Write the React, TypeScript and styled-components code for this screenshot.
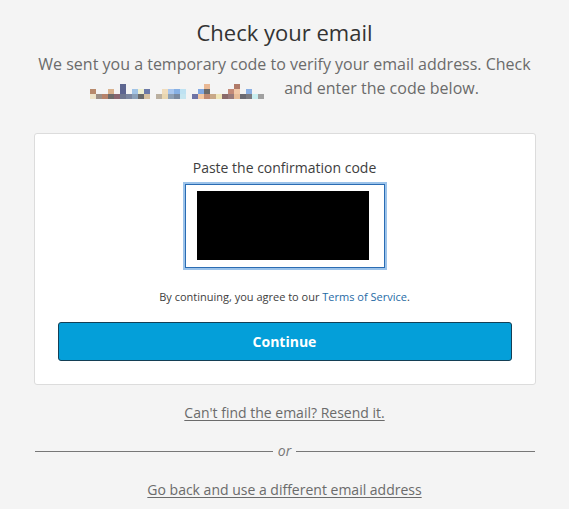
import React from "react";
import styled, { createGlobalStyle } from "styled-components";

const Global = createGlobalStyle`
  html, body { margin: 0; padding: 0; background: #f4f4f4; }
  body { font-family: "Open Sans", "Noto Sans", sans-serif; color: #333; }
`;

const Page = styled.main`
  width: 502px;
  margin: 0 auto;
  padding-top: 17px;
  display: flex;
  flex-direction: column;
  align-items: stretch;
  text-align: center;
`;

const Title = styled.h1`
  margin: 0;
  font-size: 22px;
  line-height: 30px;
  font-weight: 400;
  color: #333;
`;

const Subtitle = styled.p`
  margin: 5px -10px 0;
  font-size: 16px;
  line-height: 24px;
  color: #6b6b6b;
`;

const Pixels = styled.span`
  display: inline-flex;
  vertical-align: middle;
  margin-right: 20px;
  position: relative;
  top: 2px;
`;

const PixelCol = styled.span`
  display: inline-flex;
  flex-direction: column;
  justify-content: flex-end;
  width: 6px;
`;

const Px = styled.span<{ $c: string }>`
  display: block;
  width: 6px;
  height: 5px;
  background: ${(p) => p.$c};
`;

const Card = styled.section`
  margin-top: 33px;
  background: #fff;
  border: 1px solid #dcdcdc;
  border-radius: 3px;
  padding: 24px 23px 23px;
  display: flex;
  flex-direction: column;
  align-items: center;
`;

const Label = styled.label`
  font-size: 14px;
  line-height: 20px;
  color: #3e3e3e;
`;

const CodeField = styled.div`
  box-sizing: border-box;
  margin-top: 6px;
  width: 200px;
  height: 84px;
  border: 1px solid #2a6cb3;
  box-shadow: 0 0 0 2px #9cc3ea;
  background: #fff;
  display: flex;
  padding: 6px 15px 7px 11px;
`;

const Redaction = styled.div`
  flex: 1;
  background: #000;
`;

const Terms = styled.p`
  margin: 21px 0 0;
  font-size: 11px;
  line-height: 16px;
  color: #3e3e3e;
`;

const TermsLink = styled.a`
  color: #1f6ba6;
  text-decoration: none;
`;

const Button = styled.button`
  margin-top: 17px;
  width: 100%;
  height: 39px;
  border: 1px solid #143f55;
  border-radius: 3px;
  background: #049fd9;
  color: #fff;
  font-family: "Open Sans", sans-serif;
  font-weight: 700;
  font-size: 14px;
  cursor: pointer;
`;

const TextLink = styled.a<{ $mt: number }>`
  display: block;
  margin-top: ${(p) => p.$mt}px;
  font-size: 14px;
  line-height: 20px;
  color: #6b6b6b;
  text-decoration: underline;
  text-underline-offset: 2px;
  align-self: center;
`;

const Divider = styled.div`
  margin-top: 18px;
  display: flex;
  align-items: center;
  gap: 5px;
  padding: 0 1px;
  color: #777;
  font-size: 14px;
  line-height: 20px;
  font-style: italic;
  &::before, &::after {
    content: "";
    flex: 1;
    height: 1px;
    background: #777;
  }
`;

const pixelCols: string[][] = [
  ["#b88a6c", "#eee3c8"],
  ["#9c8f86"],
  ["#b7836b"],
  ["#d9b28e", "#6c6a6a"],
  ["#8a6670"],
  ["#5d6690", "#5c6490", "#6e7690"],
  ["#7b86a0"],
  ["#a2c4e6", "#8aa0b8"],
  ["#eff0d0", "#6a6a6a"],
  ["#6c7aa8", "#d6c1a0"],
  ["#f4f4f4"],
  ["#bbb0a0"],
  ["#f0dcbc", "#e9d6b0"],
  ["#a8c6ee", "#8ea0b4"],
  ["#86b0e4", "#7a8aa0"],
  ["#bfe2f2", "#c6e6f0"],
  ["#f4f4f4"],
  ["#6f73a4"],
  ["#82a8e2", "#f4c8a2"],
  ["#e9b894", "#6a6a6a", "#c08a72"],
  ["#c8a888"],
  ["#f0e6b8"],
  ["#8a6a6a"],
  ["#c48a78", "#9a7a7a"],
  ["#b07a68", "#f2c8a8", "#e8bc98"],
  ["#6a6a72"],
  ["#8ab0e4", "#7a7a80"],
  ["#c8eef0"],
  ["#a0a0a0"],
];

export default function App() {
  return (
    <>
      <Global />
      <Page>
        <Title>Check your email</Title>
        <Subtitle>
          We sent you a temporary code to verify your email address. Check{" "}
          <Pixels aria-label="redacted email address">
            {pixelCols.map((col, i) => (
              <PixelCol key={i}>
                {col.map((c, j) => (
                  <Px key={j} $c={c} />
                ))}
              </PixelCol>
            ))}
          </Pixels>
          and enter the code below.
        </Subtitle>
        <Card>
          <Label>Paste the confirmation code</Label>
          <CodeField>
            <Redaction />
          </CodeField>
          <Terms>
            By continuing, you agree to our{" "}
            <TermsLink href="#">Terms of Service</TermsLink>.
          </Terms>
          <Button>Continue</Button>
        </Card>
        <TextLink $mt={18} href="#">Can't find the email? Resend it.</TextLink>
        <Divider>or</Divider>
        <TextLink $mt={19} href="#">Go back and use a different email address</TextLink>
      </Page>
    </>
  );
}
